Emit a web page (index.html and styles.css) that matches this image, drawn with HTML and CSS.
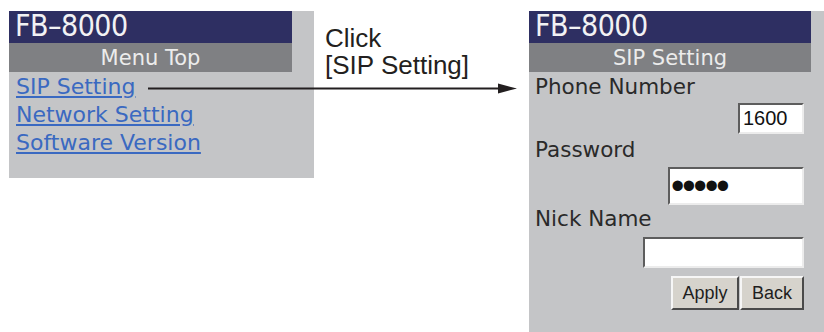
FILE: index.html
```html
<!DOCTYPE html>
<html>
<head>
    <title>FB-8000 SIP Setting</title>
    <link rel="stylesheet" href="styles.css">
</head>
<body>
    <div class="figure">
        <div class="screen menu">
            <div class="screen-inner">
                <div class="title">FB&ndash;8000</div>
                <div class="subtitle">Menu Top</div>
                <ul class="links">
                    <li><a href="#">SIP Setting</a></li>
                    <li><a href="#">Network Setting</a></li>
                    <li><a href="#">Software Version</a></li>
                </ul>
            </div>
        </div>

        <div class="caption">Click<br>[SIP Setting]</div>

        <div class="screen sip">
            <div class="screen-inner">
                <div class="title">FB&ndash;8000</div>
                <div class="subtitle">SIP Setting</div>
                <div class="form">
                    <label for="phone">Phone Number</label>
                    <input type="text" id="phone" class="field phone" value="1600">
                    <label for="password">Password</label>
                    <input type="password" id="password" class="field password" value="12345">
                    <label for="nick">Nick Name</label>
                    <input type="text" id="nick" class="field nick">
                    <div class="buttons">
                        <button class="apply">Apply</button>
                        <button class="back">Back</button>
                    </div>
                </div>
            </div>
        </div>

        <svg class="arrow" width="824" height="332" viewBox="0 0 824 332">
            <line x1="148" y1="88.5" x2="502" y2="88.5" stroke="#231f20" stroke-width="2"/>
            <polygon points="498,83.5 517,88.5 498,93.5" fill="#231f20"/>
        </svg>
    </div>
</body>
</html>
```

FILE: styles.css
```css
body {
    margin: 0;
    padding: 0;
    background: #fff;
}
.figure {
    position: relative;
    display: flex;
    align-items: flex-start;
    width: 824px;
    height: 332px;
    box-sizing: border-box;
    padding: 11px 0 0 9px;
    overflow: hidden;
}
.screen {
    flex: none;
    background-color: #c4c5c7;
    font-family: "DejaVu Sans", sans-serif;
}
.menu {
    width: 305px;
    height: 167px;
}
.sip {
    width: 295px;
    height: 321px;
}
.menu .screen-inner {
    width: 283px;
}
.sip .screen-inner {
    width: 282px;
}
.title {
    height: 32px;
    line-height: 29px;
    padding-left: 6px;
    background-color: #2e2f62;
    color: #f2f2f4;
    font-family: "DejaVu Sans Condensed", "DejaVu Sans", sans-serif;
    font-stretch: condensed;
    font-size: 30px;
    letter-spacing: -0.5px;
}
.subtitle {
    height: 29px;
    line-height: 30px;
    background-color: #7f8083;
    color: #ececec;
    text-align: center;
    font-size: 21px;
}
.links {
    list-style: none;
    margin: 0;
    padding: 1px 0 0 7px;
}
.links li {
    line-height: 28px;
    font-size: 22px;
}
.links a {
    color: #3a69c1;
}
.caption {
    flex: none;
    width: 204px;
    margin: 14px 0 0 11px;
    font-family: "Liberation Sans", Arial, sans-serif;
    font-size: 26px;
    line-height: 27px;
    color: #231f20;
}
.form {
    display: flex;
    flex-direction: column;
    align-items: flex-end;
    padding: 1px 7px 0 6px;
}
.form label {
    align-self: flex-start;
    font-size: 21.5px;
    line-height: 28px;
    color: #2a2a2a;
}
.field {
    box-sizing: border-box;
    margin: 0;
    padding: 0 3px;
    border-style: solid;
    border-width: 2px;
    border-color: #5d5d5d #ececec #ececec #5d5d5d;
    background: #fff;
    color: #111;
    font-family: "Liberation Sans", Arial, sans-serif;
    font-size: 20px;
    outline: none;
}
.phone {
    width: 66px;
    height: 31px;
    margin: 2px 0;
}
.password {
    width: 136px;
    height: 38px;
    margin-top: 3px;
    padding-left: 1px;
    font-size: 38px;
    letter-spacing: -2px;
}
.nick {
    width: 161px;
    height: 31px;
    margin-top: 4px;
}
.buttons {
    display: flex;
    gap: 1px;
    margin-top: 8px;
}
.buttons button {
    box-sizing: border-box;
    height: 34px;
    margin: 0;
    padding: 0;
    border-style: solid;
    border-width: 2px;
    border-color: #f6f6f6 #4a4a4a #4a4a4a #f6f6f6;
    background-color: #d6d3cc;
    color: #1e1e1e;
    font-family: "Liberation Sans", Arial, sans-serif;
    font-size: 18px;
}
.apply {
    width: 68px;
}
.back {
    width: 64px;
}
.arrow {
    position: absolute;
    left: 0;
    top: 0;
    pointer-events: none;
}
```
